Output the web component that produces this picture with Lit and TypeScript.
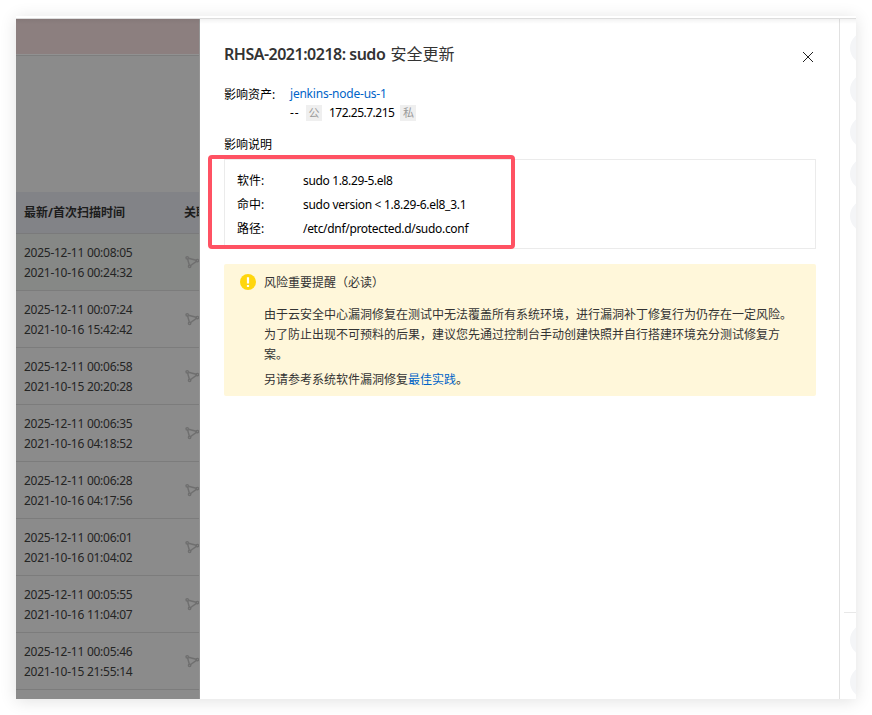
import { LitElement, html, css } from "lit";
import { customElement } from "lit/decorators.js";

const scans = [
  ["2025-12-11 00:08:05", "2021-10-16 00:24:32"],
  ["2025-12-11 00:07:24", "2021-10-16 15:42:42"],
  ["2025-12-11 00:06:58", "2021-10-15 20:20:28"],
  ["2025-12-11 00:06:35", "2021-10-16 04:18:52"],
  ["2025-12-11 00:06:28", "2021-10-16 04:17:56"],
  ["2025-12-11 00:06:01", "2021-10-16 01:04:02"],
  ["2025-12-11 00:05:55", "2021-10-16 11:04:07"],
  ["2025-12-11 00:05:46", "2021-10-15 21:55:14"],
];

@customElement("scan-list")
class ScanList extends LitElement {
  static styles = css`
    :host { display: block; width: 183px; flex: none; overflow: hidden; background: #8b8b8b; color: #242424; border-right: 1px solid #959595; }
    .alert { height: 35px; background: #8c7f7f; border-bottom: 1px solid #919191; }
    .space { height: 136px; border-top: 1px solid #7e7e7e; }
    .head { display: flex; height: 41px; line-height: 42px; background: #828387; border-bottom: 1px solid #7a7a7b; font-weight: 700; white-space: nowrap; color: #1c1c1c; }
    .head .time { width: 152px; padding-left: 8px; flex: none; }
    .head .rel { padding-left: 8px; }
    .row { display: flex; height: 47px; padding: 9px 0 0 8px; border-bottom: 1px solid #7c7c7c; line-height: 20px; letter-spacing: -0.26px; }
    .row.hover { background: #868886; }
    .times { width: 160px; flex: none; }
    svg { display: block; flex: none; margin-top: 12px; }
  `;
  render() {
    return html`
      <div class="alert"></div>
      <div class="space"></div>
      <div class="head"><div class="time">最新/首次扫描时间</div><div class="rel">关联</div></div>
      ${scans.map(
        (s, i) => html`<div class="row ${i === 0 ? "hover" : ""}">
          <div class="times"><div>${s[0]}</div><div>${s[1]}</div></div>
          <svg width="15" height="14" viewBox="0 0 15 14" fill="none" stroke="#6f6f6f" stroke-width="1.4">
            <circle cx="3.2" cy="2.8" r="1.2" /><circle cx="13.4" cy="5.6" r="1.2" /><circle cx="5.6" cy="11.3" r="1.2" />
            <path d="M4.4 3.2L12.2 5.2M12.4 6.4L6.6 10.5M3.6 4L5.3 10" />
          </svg>
        </div>`
      )}
    `;
  }
}

@customElement("detail-drawer")
class DetailDrawer extends LitElement {
  static styles = css`
    :host { display: block; width: 592px; padding: 0 23px 0 24px; flex: none; background: #fff; border-right: 1px solid #e1e1e1; color: #000; }
    header { display: flex; justify-content: space-between; height: 64px; padding-top: 24px; box-sizing: border-box; }
    h1 { margin: 0; font-size: 16px; line-height: 22px; font-weight: 400; color: #333; }
    h1 b { font-weight: 600; letter-spacing: -0.5px; margin-right: 1px; }
    header svg { margin: 8px 2px 0 0; }
    .asset { display: flex; height: 40px; line-height: 20px; }
    .asset .label { width: 66px; padding-top: 2px; box-sizing: border-box; }
    .link { color: #0064c8; }
    .name { letter-spacing: -0.22px; padding-top: 1px; height: 19px; }
    .ips { display: flex; align-items: center; letter-spacing: -0.25px; }
    .tag { width: 16px; height: 16px; line-height: 16px; text-align: center; background: #efefef; color: #999; font-size: 11px; letter-spacing: 0; }
    .dash { width: 16px; letter-spacing: 1px; }
    .ip { margin: 0 6px 0 7px; letter-spacing: -0.5px; }
    .section { line-height: 20px; margin-top: 12px; height: 24px; }
    .box { box-sizing: border-box; height: 90px; border: 1px solid #ebebeb; padding: 9px 12px; position: relative; line-height: 24px; }
    .line { display: flex; }
    .line .key { width: 66px; }
    .mark { position: absolute; left: -17px; top: -5px; width: 299px; height: 86px; border: 4px solid #ff5263; border-radius: 4px; }
    .notice { display: flex; box-sizing: border-box; height: 132px; margin-top: 15px; padding: 9px 16px 0; background: #fff7da; border-radius: 2px; color: #333; line-height: 20px; }
    .notice svg { flex: none; margin: 1px 8px 0 0; }
    .notice p { margin: 0; width: 530px; }
    .notice .title { margin-bottom: 12px; }
    .notice .more { margin-top: 5px; }
    .s1 { letter-spacing: -0.35px; } .s2 { letter-spacing: -0.29px; } .s3 { letter-spacing: -0.31px; }
  `;
  render() {
    return html`
      <header>
        <h1><b>RHSA-2021:0218: sudo</b> 安全更新</h1>
        <svg width="12" height="12" viewBox="0 0 12 12" stroke="#222" stroke-width="1"><path d="M1 1L11 11M11 1L1 11" /></svg>
      </header>
      <div class="asset">
        <div class="label">影响资产:</div>
        <div>
          <div class="link name">jenkins-node-us-1</div>
          <div class="ips"><span class="dash">--</span><span class="tag">公</span><span class="ip">172.25.7.215</span><span class="tag">私</span></div>
        </div>
      </div>
      <div class="section">影响说明</div>
      <div class="box">
        <div class="line"><div class="key">软件:</div><div class="s1">sudo 1.8.29-5.el8</div></div>
        <div class="line"><div class="key">命中:</div><div class="s2">sudo version &lt; 1.8.29-6.el8_3.1</div></div>
        <div class="line"><div class="key">路径:</div><div class="s3">/etc/dnf/protected.d/sudo.conf</div></div>
        <div class="mark"></div>
      </div>
      <div class="notice">
        <svg width="16" height="16" viewBox="0 0 16 16"><circle cx="8" cy="8" r="8" fill="#ffd60d" /><path d="M8 3.2V9.4M8 11V13" stroke="#fff" stroke-width="2.2" /></svg>
        <div>
          <p class="title">风险重要提醒（必读）</p>
          <p>由于云安全中心漏洞修复在测试中无法覆盖所有系统环境，进行漏洞补丁修复行为仍存在一定风险。<br />为了防止出现不可预料的后果，建议您先通过控制台手动创建快照并自行搭建环境充分测试修复方<br />案。</p>
          <p class="more">另请参考系统软件漏洞修复<span class="link">最佳实践</span>。</p>
        </div>
      </div>
    `;
  }
}

@customElement("side-rail")
class SideRail extends LitElement {
  static styles = css`
    :host { display: flex; flex-direction: column; flex: 1; min-width: 0; background: #fff; overflow: hidden; }
    .group { display: flex; flex-direction: column; gap: 10px; padding: 13px 0 0 10px; }
    .top { height: 580px; }
    .bottom { margin-left: 4px; padding: 11px 0 0 6px; border-top: 1px solid #e8e8e8; }
    i { display: block; width: 32px; height: 32px; border-radius: 50%; background: #f4f5f7; flex: none; }
  `;
  render() {
    return html`<div class="group top">${[0, 1, 2, 3, 4].map(() => html`<i></i>`)}</div>
      <div class="group bottom"><i></i><i></i></div>`;
  }
}

@customElement("app-root")
class AppRoot extends LitElement {
  static styles = css`
    :host { display: block; box-sizing: border-box; height: 715px; padding: 16px; background: #fff; overflow: hidden; font: 12px/20px "Noto Sans", "Noto Sans CJK SC", sans-serif; }
    .window { width: 840px; height: 683px; box-sizing: border-box; border-top: 2px solid #fff; box-shadow: 0 2px 16px rgba(0, 0, 0, 0.12); background: #fff; overflow: hidden; }
    .body { display: flex; height: 680px; border-top: 1px solid #ddd; position: relative; }
    .shade { position: absolute; left: 0; right: 0; top: 0; height: 5px; background: linear-gradient(rgba(0, 0, 0, 0.05), transparent); }
  `;
  render() {
    return html`<div class="window"><div class="body"><scan-list></scan-list><detail-drawer></detail-drawer><side-rail></side-rail><div class="shade"></div></div></div>`;
  }
}
